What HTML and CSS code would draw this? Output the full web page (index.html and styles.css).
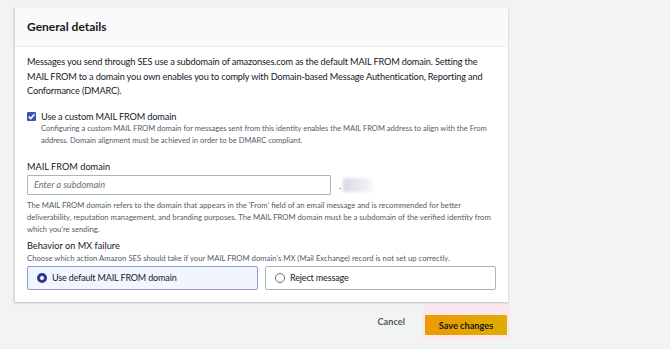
FILE: index.html
```html
<!DOCTYPE html>
<html lang="en">
<head>
  <meta charset="UTF-8" />
  <title>Edit MAIL FROM domain</title>
  <link rel="stylesheet" href="styles.css">
</head>
<body>

  <section class="panel">
    <div class="panel-header">
      <h2>General details</h2>
    </div>
    <div class="panel-body">
      <p class="intro">Messages you send through SES use a subdomain of amazonses.com as the default MAIL FROM domain. Setting the MAIL FROM to a domain you own enables you to comply with Domain-based Message Authentication, Reporting and Conformance (DMARC).</p>

      <label class="check">
        <span class="check-box">
          <svg width="9" height="9" viewBox="0 0 10 10"><path d="M2 5.2L4.2 7.4L8.2 2.6" fill="none" stroke="#fff" stroke-width="1.8" /></svg>
        </span>
        <span>
          <span class="check-label">Use a custom MAIL FROM domain</span>
          <span class="check-desc">Configuring a custom MAIL FROM domain for messages sent from this identity enables the MAIL FROM address to align with the From address. Domain alignment must be achieved in order to be DMARC compliant.</span>
        </span>
      </label>

      <div class="field first">
        <div class="field-label">MAIL FROM domain</div>
        <div class="input-row">
          <div class="input">Enter a subdomain</div>
          <span class="suffix">.</span>
          <span class="blurred"></span>
        </div>
        <p class="hint">The MAIL FROM domain refers to the domain that appears in the 'From' field of an email message and is recommended for better deliverability, reputation management, and branding purposes. The MAIL FROM domain must be a subdomain of the verified identity from which you're sending.</p>
      </div>

      <div class="field">
        <div class="field-label">Behavior on MX failure</div>
        <p class="hint tight">Choose which action Amazon SES should take if your MAIL FROM domain's MX (Mail Exchange) record is not set up correctly.</p>
        <div class="tiles">
          <div class="tile selected">
            <span class="radio on"></span>
            <span>Use default MAIL FROM domain</span>
          </div>
          <div class="tile">
            <span class="radio"></span>
            <span>Reject message</span>
          </div>
        </div>
      </div>
    </div>
  </section>

  <div class="actions">
    <button class="btn-link">Cancel</button>
    <span class="btn-wrap"><button class="btn-primary">Save changes</button></span>
  </div>

</body>
</html>
```

FILE: styles.css
```css
* {
  margin: 0;
  padding: 0;
  box-sizing: border-box;
}

body {
  font-family: 'Lato', 'Open Sans', sans-serif;
  background-color: #f2f3f3;
  color: #16191f;
  padding: 8px 162px 0 14px;
  width: 670px;
  height: 349px;
  overflow: hidden;
}

.panel {
  background: #fff;
  border-left: 1px solid #d5dbdb;
  box-shadow: 0 1px 2px rgba(0, 31, 63, 0.25);
}

.panel-header {
  background: #fafafa;
  border-bottom: 1px solid #eaeded;
  height: 39px;
  padding: 11px 12px 0;
}

.panel-header h2 {
  font-size: 12px;
  font-weight: 700;
}

.panel-body {
  padding: 8px 12px 12px;
}

.intro {
  font-size: 9.2px;
  letter-spacing: -0.15px;
  line-height: 14.5px;
  margin-bottom: 11px;
}

.check {
  display: flex;
  gap: 5px;
  align-items: flex-start;
}

.check-box {
  flex: none;
  width: 9px;
  height: 9px;
  margin-top: 2px;
  border-radius: 1px;
  background: #4253b8;
  display: flex;
  align-items: center;
  justify-content: center;
}

.check-label {
  display: block;
  font-size: 9.2px;
  letter-spacing: -0.15px;
  line-height: 13px;
}

.check-desc {
  display: block;
  font-size: 7.55px;
  line-height: 12px;
  color: #545b64;
}

.field {
  margin-top: 4px;
}

.field.first {
  margin-top: 13px;
}

.field-label {
  font-size: 9.2px;
  line-height: 13px;
}

.input-row {
  display: flex;
  align-items: center;
  margin-top: 2px;
}

.input {
  width: 304px;
  height: 20px;
  border: 1px solid #aab7b8;
  border-radius: 1px;
  font-size: 9.2px;
  font-style: italic;
  color: #687078;
  padding: 3px 6px;
}

.suffix {
  font-size: 10px;
  color: #545b64;
  margin-left: 8px;
}

.blurred {
  width: 32px;
  height: 14px;
  margin-left: 2px;
  background: linear-gradient(90deg, #d9d9e6, #eeeef4 70%, #fff);
  filter: blur(1.5px);
}

.hint {
  font-size: 7.7px;
  line-height: 12px;
  color: #545b64;
  margin-top: 4px;
}

.hint.tight {
  margin-top: 0;
  margin-bottom: 2px;
}

.tiles {
  display: flex;
  gap: 7px;
}

.tile {
  width: 231px;
  height: 24px;
  border: 1px solid #aab7b8;
  border-radius: 2px;
  display: flex;
  align-items: center;
  gap: 5px;
  padding-left: 9px;
  font-size: 9px;
  letter-spacing: -0.15px;
}

.tile.selected {
  background: #f1f5fd;
  border-color: #8f9bd7;
}

.radio {
  width: 10px;
  height: 10px;
  border-radius: 50%;
  border: 1px solid #687078;
  background: #fff;
}

.radio.on {
  border: 3px solid #2b3a8f;
}

.actions {
  display: flex;
  justify-content: flex-end;
  align-items: center;
  gap: 18px;
  margin-top: 3px;
  margin-right: -2px;
}

.btn-link {
  font-family: inherit;
  font-size: 9.2px;
  font-weight: 700;
  color: #545b64;
  background: none;
  border: none;
}

.btn-wrap {
  background: #fde6ef;
  padding: 8px 3px 4px 2px;
}

.btn-primary {
  font-family: inherit;
  font-size: 9.2px;
  font-weight: 700;
  color: #16191f;
  background: linear-gradient(90deg, #ec9a00, #dfac00);
  border: none;
  border-radius: 1px;
  width: 82px;
  height: 20px;
}
```
